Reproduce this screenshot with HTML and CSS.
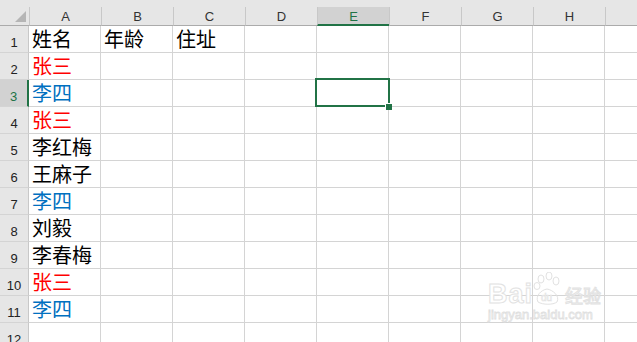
FILE: index.html
```html
<!DOCTYPE html>
<html lang="zh-CN">
<head>
<meta charset="utf-8">
<title>Sheet</title>
<link rel="stylesheet" href="styles.css">
</head>
<body>
<div class="sheet">
  <div class="corner"><span class="tri"></span></div>
  <div class="strip"></div>
  <div class="ch">A</div><div class="ch">B</div><div class="ch">C</div><div class="ch">D</div>
  <div class="ch sel">E</div><div class="ch">F</div><div class="ch">G</div><div class="ch">H</div><div class="ch last"></div>

  <div class="rh">1</div><div class="c">姓名</div><div class="c">年龄</div><div class="c">住址</div><div class="c"></div><div class="c"></div><div class="c"></div><div class="c"></div><div class="c"></div><div class="c last"></div>
  <div class="rh">2</div><div class="c red">张三</div><div class="c"></div><div class="c"></div><div class="c"></div><div class="c"></div><div class="c"></div><div class="c"></div><div class="c"></div><div class="c last"></div>
  <div class="rh sel">3</div><div class="c blue">李四</div><div class="c"></div><div class="c"></div><div class="c"></div><div class="c active"><span class="handle"></span></div><div class="c"></div><div class="c"></div><div class="c"></div><div class="c last"></div>
  <div class="rh">4</div><div class="c red">张三</div><div class="c"></div><div class="c"></div><div class="c"></div><div class="c"></div><div class="c"></div><div class="c"></div><div class="c"></div><div class="c last"></div>
  <div class="rh">5</div><div class="c">李红梅</div><div class="c"></div><div class="c"></div><div class="c"></div><div class="c"></div><div class="c"></div><div class="c"></div><div class="c"></div><div class="c last"></div>
  <div class="rh">6</div><div class="c">王麻子</div><div class="c"></div><div class="c"></div><div class="c"></div><div class="c"></div><div class="c"></div><div class="c"></div><div class="c"></div><div class="c last"></div>
  <div class="rh">7</div><div class="c blue">李四</div><div class="c"></div><div class="c"></div><div class="c"></div><div class="c"></div><div class="c"></div><div class="c"></div><div class="c"></div><div class="c last"></div>
  <div class="rh">8</div><div class="c">刘毅</div><div class="c"></div><div class="c"></div><div class="c"></div><div class="c"></div><div class="c"></div><div class="c"></div><div class="c"></div><div class="c last"></div>
  <div class="rh">9</div><div class="c">李春梅</div><div class="c"></div><div class="c"></div><div class="c"></div><div class="c"></div><div class="c"></div><div class="c"></div><div class="c"></div><div class="c last"></div>
  <div class="rh">10</div><div class="c red">张三</div><div class="c"></div><div class="c"></div><div class="c"></div><div class="c"></div><div class="c"></div><div class="c"></div><div class="c"></div><div class="c last"></div>
  <div class="rh">11</div><div class="c blue">李四</div><div class="c"></div><div class="c"></div><div class="c"></div><div class="c"></div><div class="c"></div><div class="c"></div><div class="c"></div><div class="c last"></div>
  <div class="rh">12</div><div class="c"></div><div class="c"></div><div class="c"></div><div class="c"></div><div class="c"></div><div class="c"></div><div class="c"></div><div class="c"></div><div class="c last"></div>
</div>
<div class="wm">
  <div class="wm-top">
    <span class="wm-bai">Bai</span>
    <svg class="wm-paw" width="30" height="34" viewBox="0 0 30 34">
      <g fill="none" stroke="#e2e2e2" stroke-width="1">
        <ellipse cx="8" cy="7" rx="3" ry="4"/>
        <ellipse cx="16" cy="4" rx="3" ry="4"/>
        <ellipse cx="23" cy="9" rx="3" ry="4"/>
        <ellipse cx="4" cy="14" rx="3" ry="3.5"/>
        <path d="M5 30 C2 24 8 18 14 17 C20 18 27 24 24 30 C20 33 10 33 5 30 Z"/>
      </g>
      <text x="8" y="29" font-family="Liberation Sans, sans-serif" font-size="10" fill="#fff" stroke="#e2e2e2" stroke-width="0.6">du</text>
    </svg>
    <span class="wm-jy">经验</span>
  </div>
  <div class="wm-url">jingyan.baidu.com</div>
</div>
</body>
</html>
```
FILE: styles.css
```css
html, body {
  margin: 0;
  padding: 0;
  background: #fff;
  overflow: hidden;
}
body {
  width: 637px;
  height: 342px;
  position: relative;
}
.sheet {
  display: grid;
  grid-template-columns: 29px repeat(8, 72px) 1fr;
  grid-template-rows: 7px 19px repeat(12, 27px);
  font-family: "Liberation Sans", Arial, sans-serif;
}
.corner {
  grid-row: 1 / 3;
  grid-column: 1;
  background: #e6e6e6;
  border-bottom: 1px solid #ababab;
  position: relative;
  box-sizing: border-box;
}
.tri {
  position: absolute;
  right: 3px;
  bottom: 3px;
  width: 0;
  height: 0;
  border-left: 11px solid transparent;
  border-bottom: 11px solid #b5b5b5;
}
.strip {
  grid-row: 1;
  grid-column: 2 / -1;
  background: #e6e6e6;
}
.ch {
  background-color: #e6e6e6;
  border-bottom: 1px solid #ababab;
  box-sizing: border-box;
  border-left: 1px solid #c8c8c8;
  font-size: 13px;
  color: #333;
  display: flex;
  align-items: flex-end;
  justify-content: center;
  line-height: 13px;
  padding-bottom: 2px;
}
.ch.sel {
  background-color: #d2d2d2;
  border-bottom: 2px solid #217346;
  color: #217346;
  padding-bottom: 1px;
}
.rh {
  background: #e6e6e6;
  border-right: 1px solid #c8c8c8;
  border-bottom: 1px solid #d4d4d4;
  box-sizing: border-box;
  font-size: 13px;
  color: #222;
  display: flex;
  align-items: flex-end;
  justify-content: center;
  line-height: 13px;
  padding-bottom: 3px;
}
.rh.sel {
  background: #d2d2d2;
  border-right: 2px solid #217346;
  color: #217346;
}
.c {
  border-right: 1px solid #d4d4d4;
  border-bottom: 1px solid #d4d4d4;
  box-sizing: border-box;
  font-family: "Noto Sans CJK SC", "Noto Sans", sans-serif;
  font-size: 20px;
  line-height: 20px;
  color: #000;
  display: flex;
  align-items: flex-end;
  padding-left: 3px;
  padding-bottom: 3px;
  white-space: nowrap;
  overflow: visible;
}
.c.last, .ch.last { border-right: none; }
.red { color: #ff0000; }
.blue { color: #0070c0; }
.active {
  position: relative;
}
.active::before {
  content: "";
  position: absolute;
  left: -2px;
  top: -2px;
  width: 75px;
  height: 29px;
  box-sizing: border-box;
  border: 2px solid #217346;
}
.handle {
  position: absolute;
  right: -4px;
  bottom: -4px;
  width: 6px;
  height: 6px;
  background: #217346;
  border-left: 1px solid #fff;
  border-top: 1px solid #fff;
}
.wm {
  position: absolute;
  left: 488px;
  top: 272px;
  width: 120px;
  font-family: "Liberation Sans", Arial, sans-serif;
  color: #fff;
  pointer-events: none;
}
.wm-top {
  display: flex;
  align-items: flex-end;
}
.wm-bai {
  font-size: 27px;
  font-weight: bold;
  line-height: 24px;
  color: #fff;
  -webkit-text-stroke: 1px #e2e2e2;
  letter-spacing: 1px;
}
.wm-paw { margin-left: 0; }
.wm-jy {
  font-family: "Noto Sans CJK SC", sans-serif;
  font-size: 18px;
  line-height: 22px;
  color: #fff;
  -webkit-text-stroke: 1px #e2e2e2;
  margin-left: 2px;
}
.wm-url {
  font-size: 13px;
  line-height: 16px;
  color: #fff;
  -webkit-text-stroke: 0.8px #e0e0e0;
  margin-top: 1px;
}
```
